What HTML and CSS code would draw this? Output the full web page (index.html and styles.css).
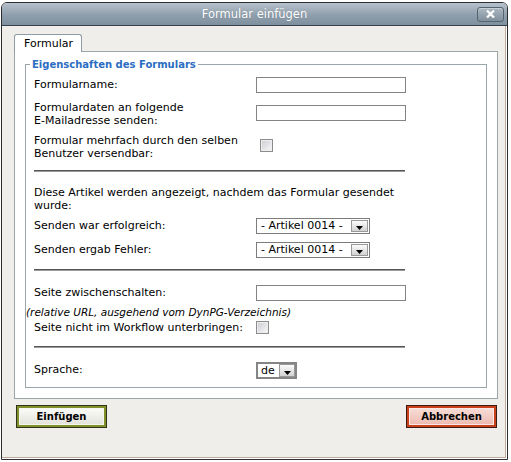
FILE: index.html
```html
<!DOCTYPE html>
<html lang="de">
<head>
<meta charset="utf-8">
<title>Formular einfügen</title>
<link rel="stylesheet" href="styles.css">
</head>
<body>
<div class="window">
  <div class="titlebar">
    <span class="title">Formular einfügen</span>
    <span class="close">
      <svg width="9" height="8" viewBox="0 0 9 8"><path d="M1 0.5 L8 7.5 M8 0.5 L1 7.5" stroke="#fff" stroke-width="2.2" fill="none"/></svg>
    </span>
  </div>
  <div class="body">
    <div class="tabs"><span class="tab">Formular</span></div>
    <div class="panel">
      <fieldset class="props">
        <legend>Eigenschaften des Formulars</legend>
        <div class="row r1">
          <span class="lbl mid">Formularname:</span>
          <input class="input" type="text">
        </div>
        <div class="row r2">
          <span class="lbl">Formulardaten an folgende <span class="nowrap">E-Mailadresse</span> senden:</span>
          <input class="input down4" type="text">
        </div>
        <div class="row r3">
          <span class="lbl">Formular mehrfach durch den selben Benutzer versendbar:</span>
          <input class="check shifted" type="checkbox">
        </div>
        <div class="sep s1"></div>
        <div class="info">Diese Artikel werden angezeigt, nachdem das Formular gesendet wurde:</div>
        <div class="row r4">
          <span class="lbl mid">Senden war erfolgreich:</span>
          <span class="sel wide"><span class="val">- Artikel 0014 -</span><span class="drop"><svg width="7" height="4" viewBox="0 0 7 4"><path d="M0 0 H7 L3.5 4 Z" fill="#000"/></svg></span></span>
        </div>
        <div class="row r5">
          <span class="lbl mid">Senden ergab Fehler:</span>
          <span class="sel wide"><span class="val">- Artikel 0014 -</span><span class="drop"><svg width="7" height="4" viewBox="0 0 7 4"><path d="M0 0 H7 L3.5 4 Z" fill="#000"/></svg></span></span>
        </div>
        <div class="sep s2"></div>
        <div class="row r6">
          <span class="lbl mid">Seite zwischenschalten:</span>
          <input class="input" type="text">
        </div>
        <div class="note">(relative URL, ausgehend vom DynPG-Verzeichnis)</div>
        <div class="row r7">
          <span class="lbl">Seite nicht im Workflow unterbringen:</span>
          <input class="check" type="checkbox">
        </div>
        <div class="sep s3"></div>
        <div class="row r8">
          <span class="lbl mid">Sprache:</span>
          <span class="sel lang"><span class="val">de</span><span class="drop"><svg width="7" height="4" viewBox="0 0 7 4"><path d="M0 0 H7 L3.5 4 Z" fill="#000"/></svg></span></span>
        </div>
      </fieldset>
    </div>
    <div class="actions">
      <button class="btn ok" type="button">Einfügen</button>
      <button class="btn cancel" type="button">Abbrechen</button>
    </div>
  </div>
</div>
</body>
</html>
```
FILE: styles.css
```css
html, body {
  margin: 0;
  background: #ffffff;
}
body {
  font-family: "DejaVu Sans", Verdana, sans-serif;
  font-size: 11px;
  color: #000;
}
.window {
  margin: 2px 0 0 1px;
  width: 507px;
  height: 458px;
  box-sizing: border-box;
  border: 1px solid #2d2d2d;
  border-radius: 6px 6px 0 0;
  overflow: hidden;
  display: flex;
  flex-direction: column;
}
.titlebar {
  height: 23px;
  box-sizing: border-box;
  border-bottom: 1px solid #36414b;
  background: linear-gradient(#b6c2cc, #909fad 55%, #7e8f9d);
  display: grid;
  grid-template-columns: 1fr auto 1fr;
  align-items: center;
}
.title {
  grid-column: 2;
  color: #fff;
  font-size: 11.5px;
  text-shadow: 0 0 1px rgba(60, 70, 80, 0.4);
}
.close {
  grid-column: 3;
  justify-self: end;
  margin-right: 3px;
  width: 27px;
  height: 15px;
  box-sizing: border-box;
  border: 1px solid #56646f;
  border-radius: 3px;
  background: linear-gradient(#abb8c3, #808f9c);
  box-shadow: inset 0 1px 0 rgba(255, 255, 255, 0.35);
  display: flex;
  align-items: center;
  justify-content: center;
}
.close svg { display: block; }
.body {
  flex: 1;
  background: #efeeea;
  padding: 8px 9px 0 12px;
  box-shadow: inset -1px -1px 0 #ffffff, inset -2px -2px 0 #bcab9b;
}
.tabs { display: flex; }
.tab {
  position: relative;
  z-index: 1;
  margin-bottom: -1px;
  height: 18px;
  box-sizing: border-box;
  border: 1px solid #8e9ba5;
  border-bottom: 0;
  border-radius: 3px 3px 0 0;
  background: #fff;
  padding: 0 8px 0 9px;
  line-height: 17px;
}
.panel {
  background: #fff;
  border: 1px solid #9ba6ab;
  padding: 6px 10px 10px 10px;
}
.props {
  margin: 0;
  min-width: 0;
  border: 1px solid #9ba6ab;
  padding: 0 0 8px 8px;
}
.props legend {
  padding: 0 2px;
  margin-left: -4px;
  color: #2b6dc2;
  font-weight: bold;
  font-size: 10px;
  line-height: 13px;
}
.row {
  display: grid;
  grid-template-columns: 222px auto;
  align-items: start;
  justify-items: start;
}
.lbl { line-height: 13px; }
.lbl.mid { line-height: 16px; }
.nowrap { white-space: nowrap; }
.r1 { margin-top: 6px; }
.r2 { margin-top: 8px; }
.r3 { margin-top: 7px; }
.r4 { margin-top: 6px; }
.r5 { margin-top: 8px; }
.r6 { margin-top: 14px; }
.r7 { margin-top: 2px; }
.r8 { margin-top: 14px; }
.input {
  display: block;
  margin: 0;
  padding: 0 2px;
  width: 150px;
  height: 16px;
  box-sizing: border-box;
  border: 1px solid #838383;
  background: #fff;
  font: inherit;
}
.down4 { margin-top: 4px; }
.check {
  appearance: none;
  -webkit-appearance: none;
  display: block;
  margin: 0;
  width: 13px;
  height: 13px;
  box-sizing: border-box;
  border: 1px solid #8c8c8c;
  background: linear-gradient(135deg, #cbccd3, #f9f9f9);
  box-shadow: inset 0 0 0 1px #eeeeee;
}
.check.shifted { margin: 5px 0 0 4px; }
.sep {
  width: 371px;
  height: 2px;
  box-sizing: border-box;
  border-top: 1px solid #555;
  border-bottom: 1px solid #9a9a9a;
}
.s1 { margin-top: 10px; }
.s2 { margin-top: 11px; }
.s3 { margin-top: 12px; }
.info {
  margin-top: 14px;
  max-width: 380px;
  line-height: 13px;
}
.note {
  margin: 5px 0 0 -8px;
  font-style: italic;
  font-size: 10.5px;
  line-height: 13px;
}
.sel {
  display: flex;
  height: 16px;
  box-sizing: border-box;
  border: 1px solid #7d7d7d;
  background: #fff;
}
.sel.wide { width: 114px; }
.sel.lang { width: 41px; border-width: 2px; border-color: #858585; height: 17px; }
.sel .val {
  flex: 1;
  padding-left: 4px;
  line-height: 14px;
  white-space: nowrap;
}
.sel.lang .val { padding-left: 3px; line-height: 13px; }
.sel .drop {
  width: 17px;
  margin: 1px;
  box-sizing: border-box;
  border: 1px solid #999;
  background: linear-gradient(#fbfbfb, #d2d2d2);
  display: flex;
  align-items: flex-end;
  justify-content: center;
  padding-bottom: 1px;
}
.sel.lang .drop { margin: 0; width: 16px; }
.sel .drop svg { display: block; }
.actions {
  display: flex;
  justify-content: space-between;
  margin-top: 6px;
  padding: 0 1px 0 2px;
}
.btn {
  width: 91px;
  height: 23px;
  box-sizing: border-box;
  margin: 0;
  padding: 0;
  font-family: "DejaVu Sans", Verdana, sans-serif;
  font-weight: bold;
  font-size: 10px;
  color: #000;
  cursor: pointer;
}
.btn.ok {
  border: 1px solid #2f3318;
  background: linear-gradient(#fefefc, #e0e0d8);
  box-shadow: inset 0 0 0 2px #80902a, inset 0 0 0 3px #f6f6f0;
}
.btn.cancel {
  border: 1px solid #3c1a12;
  background: linear-gradient(#f9e2dc, #ebb6ab);
  box-shadow: inset 0 0 0 2px #c9411c, inset 0 0 0 3px #fbe8e4;
}
```
